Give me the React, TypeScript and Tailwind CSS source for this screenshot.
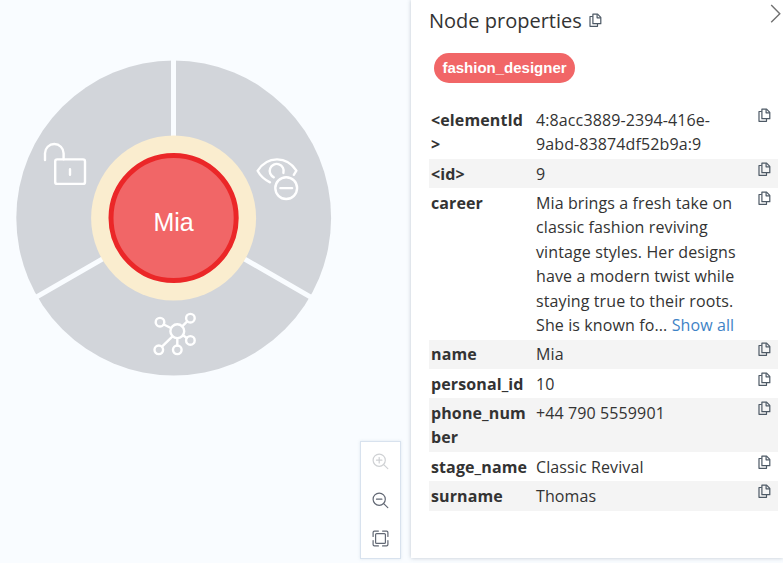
import React from "react";

type Row = { name: string[]; value: string[]; more?: boolean };

const rows: Row[] = [
  { name: ["<elementId", ">"], value: ["4:8acc3889-2394-416e-", "9abd-83874df52b9a:9"] },
  { name: ["<id>"], value: ["9"] },
  {
    name: ["career"],
    value: [
      "Mia brings a fresh take on",
      "classic fashion reviving",
      "vintage styles. Her designs",
      "have a modern twist while",
      "staying true to their roots.",
      "She is known fo... ",
    ],
    more: true,
  },
  { name: ["name"], value: ["Mia"] },
  { name: ["personal_id"], value: ["10"] },
  { name: ["phone_num", "ber"], value: ["+44 790 5559901"] },
  { name: ["stage_name"], value: ["Classic Revival"] },
  { name: ["surname"], value: ["Thomas"] },
];

function CopyIcon() {
  return (
    <svg width="13" height="15" viewBox="0 0 13 15" fill="none" stroke="#4d5965" strokeWidth="1.2" strokeLinejoin="round" className="block shrink-0">
      <path d="M3.9 1.2h4.7l3.2 3.2v6.3H3.9z" />
      <path d="M8.1 1.3v3.5h3.6M3.8 3.5H1v9.8h7.5V10.9" />
    </svg>
  );
}

function Wheel() {
  return (
    <svg width="348" height="390" viewBox="0 0 348 390" className="block" fill="none">
      <circle cx="173.7" cy="218" r="157.4" fill="#d2d5da" />
      <path d="M173.5 218V58M173.5 218L35.4 297.7M173.5 218L311.6 297.7" stroke="#f9fcff" strokeWidth="5" />
      <circle cx="173.6" cy="218" r="82.5" fill="#faedcf" />
      <circle cx="173.6" cy="218" r="62.6" fill="#f16667" stroke="#eb2728" strokeWidth="5" />
      <text x="173.6" y="231" textAnchor="middle" fill="#fff" fontSize="25" fontFamily="'Liberation Sans', Arial, sans-serif">Mia</text>
      <g stroke="#fff" strokeWidth="2.4" strokeLinecap="round" strokeLinejoin="round">
        <rect x="55.2" y="159.4" width="29.8" height="24.5" rx="2" />
        <path d="M45 160v-6.7a9.3 9.3 0 0 1 18.6 0v6M70 169.2v5.5" />
        <path d="M270 182.3C265 180 260.4 176.1 257.6 170.8C267.4 155.8 286.4 155.5 296.4 170.6L293.8 174.8" />
        <path d="M273.8 177.3A7 7 0 1 1 283.4 172.9" />
        <circle cx="286.2" cy="188.1" r="10.9" />
        <path d="M280.4 188.1h11.7" />
        <circle cx="177.3" cy="331.2" r="6.9" />
        <circle cx="160" cy="322.2" r="4.3" />
        <circle cx="190.4" cy="318.2" r="4.3" />
        <circle cx="190.4" cy="340.4" r="4.3" />
        <circle cx="177.3" cy="349.8" r="4.3" />
        <circle cx="158.8" cy="349.8" r="4.3" />
        <path d="M163.8 324.5l7 3.5M182.2 326.3l5-5M183 335.2l3.8 2.7M177.3 338.2v7.2M172.5 336.3l-10.5 10.3" />
      </g>
    </svg>
  );
}

function ZoomIcon({ plus }: { plus?: boolean }) {
  return (
    <svg width="18" height="18" viewBox="0 0 18 18" fill="none" stroke={plus ? "#cfd1d4" : "#626874"} strokeWidth="1.2" strokeLinecap="round">
      <circle cx="7.2" cy="7.2" r="6.1" />
      <path d="M11.7 11.6l4.1 4.1M4.5 7.2h5.4" />
      {plus && <path d="M7.2 4.5v5.4" />}
    </svg>
  );
}

export default function App() {
  return (
    <div className="flex h-[563px] w-[783px] overflow-hidden bg-[#f9fcff] font-['Open_Sans',sans-serif] text-[#333]">
      <div className="w-[360px] shrink-0">
        <Wheel />
      </div>
      <div className="mt-[441px] flex h-[118px] w-[41px] shrink-0 flex-col items-center justify-between border border-[#d8e2ee] bg-white pt-[11px] pb-[10px] shadow-[0_0_3px_rgba(120,150,180,0.2)]">
        <ZoomIcon plus />
        <ZoomIcon />
        <svg width="18" height="18" viewBox="0 0 18 18" fill="none" stroke="#626874" strokeWidth="1.2" strokeLinecap="round" strokeLinejoin="round">
          <rect x="3.6" y="3.6" width="9.8" height="9.8" rx="1" />
          <path d="M6.4 1.1h-4a1.3 1.3 0 0 0-1.3 1.3v4M10.6 1.1h4a1.3 1.3 0 0 1 1.3 1.3v4M6.4 15.9h-4a1.3 1.3 0 0 1-1.3-1.3v-4M10.6 15.9h4a1.3 1.3 0 0 0 1.3-1.3v-4" />
        </svg>
      </div>
      <aside className="ml-[10px] h-[558px] w-[372px] shrink-0 bg-white pl-[18px] shadow-[0_0_4px_rgba(60,80,100,0.3)]">
        <header className="flex h-[53px]">
          <h1 className="mt-[6px] w-[160px] text-[20px] leading-[30px] whitespace-nowrap">Node properties</h1>
          <div className="mt-[13px]"><CopyIcon /></div>
          <svg width="13" height="21" viewBox="0 0 13 21" className="mt-[3px] ml-auto" fill="none" stroke="#717171" strokeWidth="1.4">
            <path d="M1.2 2l8.6 8.7-8.6 8.5" />
          </svg>
        </header>
        <div className="ml-[5px] flex h-[30px] w-[141px] items-center justify-center rounded-full bg-[#f16667] font-['Liberation_Sans',Arial,sans-serif] text-[15px] font-bold text-white">
          fashion_designer
        </div>
        <div className="mt-[22.4px] w-[349px]">
          {rows.map((row) => (
            <div key={row.name[0]} className="flex py-[2.46px] text-[16px] leading-[24.4px] tracking-[0.11px] whitespace-pre even:bg-[#f4f4f4]">
              <div className="w-[107px] shrink-0 pl-[2px] font-bold">
                {row.name.map((line) => <div key={line}>{line}</div>)}
              </div>
              <div className="flex-1">
                {row.value.map((line, i) => (
                  <div key={line}>
                    {line}
                    {row.more && i === row.value.length - 1 && <a className="text-[#3f83c6]">Show all</a>}
                  </div>
                ))}
              </div>
              <div className="w-[20px] shrink-0"><CopyIcon /></div>
            </div>
          ))}
        </div>
      </aside>
    </div>
  );
}
